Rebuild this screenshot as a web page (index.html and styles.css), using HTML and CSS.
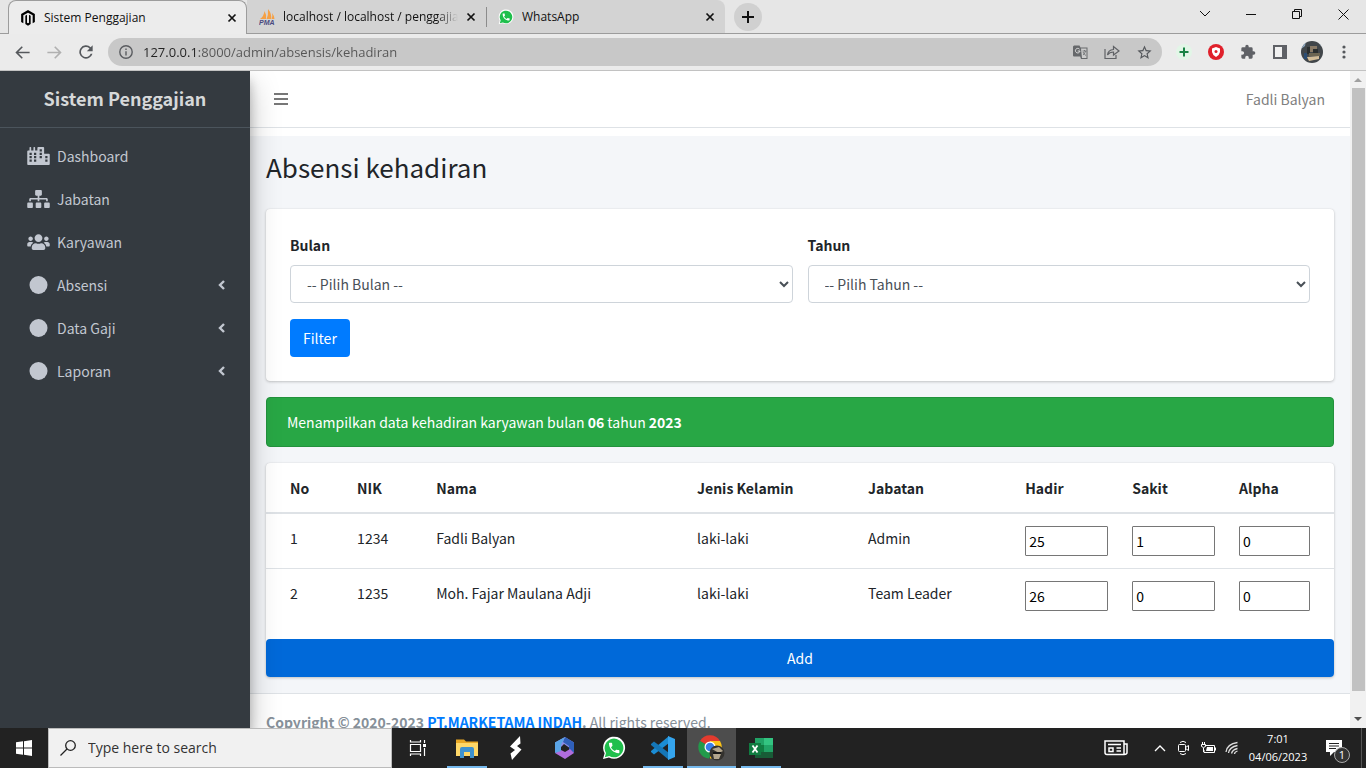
FILE: index.html
```html
<!DOCTYPE html>
<html lang="id">
<head>
<meta charset="utf-8">
<meta name="viewport" content="width=device-width, initial-scale=1">
<title>Sistem Penggajian</title>
<link rel="stylesheet" href="styles.css">
</head>
<body>
<svg class="defs" aria-hidden="true">
  <symbol id="close" viewBox="0 0 10 10"><path d="M1.5 1.5l7 7m0-7l-7 7" fill="none" stroke="#111" stroke-width="1.7"/></symbol>
  <symbol id="arrow" viewBox="0 0 24 24"><path d="M21 11H6.83l5.59-5.59L11 4l-8 8 8 8 1.41-1.41L6.83 13H21z"/></symbol>
  <symbol id="phone" viewBox="0 0 24 24"><path d="M1 23l1.6-5.8A11 11 0 1 1 7 21.4z" fill="#fff"/><path d="M2.8 21.3l1.2-4.4A9.4 9.4 0 1 1 7.300 20.100z" fill="#1fbf4c"/><path transform="translate(5.200 5) scale(.58)" d="M6.620 10.790c1.440 2.830 3.760 5.140 6.590 6.590l2.200-2.200c.27-.27.67-.36 1.020-.24 1.120.37 2.330.57 3.570.57.550 0 1 .45 1 1V20c0 .55-.45 1-1 1-9.390 0-17-7.610-17-17 0-.55.45-1 1-1h3.500c.55 0 1 .45 1 1 0 1.250.2 2.450.57 3.570.11.35.03.74-.25 1.020z" fill="#fff"/></symbol>
  <symbol id="dot" viewBox="0 0 18 18"><circle cx="9" cy="9" r="9"/></symbol>
  <symbol id="angle" viewBox="0 0 8 12"><path d="M6 2L2 6l4 4" fill="none" stroke="currentColor" stroke-width="2.400"/></symbol>
</svg>

<header class="browser">
  <div class="tabbar">
    <div class="tabs">
      <div class="tab tab-active">
        <svg class="favicon" viewBox="0 0 24 24"><path d="M12 0L1.700 6v12L5 20V8l7-4 7 4v12l3.300-2V6z"/><path d="M8 8.500v12.500l4 2.500 4-2.500V8.500l-2.500-1.300V19L12 20l-1.500-1V7.200z"/></svg>
        <span class="tab-title">Sistem Penggajian</span>
        <button class="tab-close" aria-label="Close tab"><svg width="10" height="10"><use href="#close"/></svg></button>
      </div>
      <div class="tab">
        <svg class="favicon" viewBox="0 0 16 16"><path d="M1 10Q5 7 5.500 2q2 3 1.500 8zM7.500 10Q9.500 6 9 0q4 5 3 10zM12.500 10q1.500-3 .500-6 2.500 3 2.500 6z" fill="#f5a045"/><text x="0" y="15.500" class="pma">PMA</text></svg>
        <span class="tab-title tab-fade">localhost / localhost / penggajian</span>
        <button class="tab-close" aria-label="Close tab"><svg width="10" height="10"><use href="#close"/></svg></button>
      </div>
      <div class="tab tab-divided">
        <svg class="favicon" width="18" height="18"><use href="#phone"/></svg>
        <span class="tab-title">WhatsApp</span>
        <button class="tab-close" aria-label="Close tab"><svg width="10" height="10"><use href="#close"/></svg></button>
      </div>
    </div>
    <button class="new-tab" aria-label="New tab"><svg width="12" height="12"><path d="M6 0v12M0 6h12" stroke="#111" stroke-width="2"/></svg></button>
    <div class="window-controls">
      <button aria-label="Tab search"><svg width="12" height="12" class="line"><path d="M1 3l5 5 5-5"/></svg></button>
      <button aria-label="Minimize"><svg width="10" height="10" class="line"><path d="M0 5.500h10"/></svg></button>
      <button aria-label="Restore"><svg width="10" height="10" class="line"><path d="M.5 2.500h7v7h-7zM2.500 2.500v-2h7v7h-2"/></svg></button>
      <button aria-label="Close"><svg width="11" height="11" class="line"><path d="M.5.5l10 10m0-10l-10 10"/></svg></button>
    </div>
  </div>
  <div class="toolbar">
    <button class="tool" aria-label="Back"><svg width="19" height="19" fill="#55585c"><use href="#arrow"/></svg></button>
    <button class="tool" aria-label="Forward"><svg width="19" height="19" fill="#b0b0b0" class="flip"><use href="#arrow"/></svg></button>
    <button class="tool" aria-label="Reload"><svg width="20" height="20" viewBox="0 0 24 24" fill="#55585c"><path d="M17.650 6.350A8 8 0 1 0 19.730 14h-2.080A6 6 0 1 1 16.220 7.780L13 11h7V4z"/></svg></button>
    <div class="address">
      <svg width="14" height="14" viewBox="0 0 14 14" fill="none" stroke="#5a5c60" stroke-width="1.400"><circle cx="7" cy="7" r="6.200"/><path d="M7 6.200V10.500M7 3.500v1.500"/></svg>
      <input class="url" type="text" aria-label="Address" value="127.0.0.1:8000/admin/absensis/kehadiran">
      <button class="tool" aria-label="Translate"><svg width="15" height="15" viewBox="0 0 15 15"><path d="M1 .5h5.500l1 2H14.500v11.500H8l-.8-2.500H1a1 1 0 0 1-1-1v-9z" fill="#66686b"/><path d="M8 3.500h5.500V13H9z" fill="#ccc"/><path d="M6.500 4.200A2.300 2.300 0 1 0 7 6H4.700" fill="none" stroke="#ddd"/><path d="M9.500 6h4M11.500 5v1M12.500 6q-.500 3-2.500 4m0-3q1 2.500 3 3.500" fill="none" stroke="#66686b" stroke-width=".8"/></svg></button>
      <button class="tool" aria-label="Share"><svg width="16" height="16" viewBox="0 0 16 16" fill="none" stroke="#606266" stroke-width="1.200"><path d="M1 5v9.500h11V11M3.500 11q.500-5 6-5.500V2.500L15 7l-5.500 4V8Q5.500 8 3.500 11z"/></svg></button>
      <button class="tool" aria-label="Bookmark"><svg width="17" height="17" viewBox="0 0 24 24" fill="#55585c"><path d="M22 9.240l-7.190-.62L12 2 9.190 8.630 2 9.240l5.460 4.730L5.820 21 12 17.270 18.180 21l-1.630-7.030zM12 15.400l-3.760 2.270 1-4.280-3.320-2.880 4.380-.38L12 6.100l1.710 4.040 4.380.38-3.320 2.880 1 4.280z"/></svg></button>
    </div>
    <button class="tool" aria-label="Extension"><svg width="16" height="16"><circle cx="8" cy="8" r="8" fill="#e2f6e7"/><path d="M8 3.500v9M3.500 8h9" stroke="#188344" stroke-width="2"/></svg></button>
    <button class="tool" aria-label="Ad blocker"><svg width="16" height="16"><circle cx="8" cy="8" r="8" fill="#e0202b"/><path d="M8 3l4 1.500V8q-.5 3-4 5Q4.500 11 4 8V4.500z" fill="#fff"/><circle cx="8" cy="7.500" r="1.500" fill="#e0202b"/></svg></button>
    <button class="tool" aria-label="Extensions"><svg width="16" height="16" viewBox="0 0 24 24" fill="#5f6166"><path d="M20.500 11H19V7a2 2 0 0 0-2-2h-4V3.500a2.500 2.500 0 0 0-5 0V5H4a2 2 0 0 0-2 2v3.800h1.500a2.700 2.700 0 0 1 0 5.400H2V20a2 2 0 0 0 2 2h3.800v-1.500a2.700 2.700 0 0 1 5.400 0V22H17a2 2 0 0 0 2-2v-4h1.500a2.500 2.500 0 0 0 0-5z"/></svg></button>
    <button class="tool" aria-label="Side panel"><svg width="14" height="14"><path d="M1 1h12v12H1z" fill="#f1f1f1" stroke="#5f6166" stroke-width="2"/><path d="M9 0h5v14H9z" fill="#5f6166"/></svg></button>
    <button class="tool" aria-label="Profile"><svg width="22" height="22" viewBox="0 0 22 22"><clipPath id="face"><circle cx="11" cy="11" r="11"/></clipPath><g clip-path="url(#face)"><path fill="#41464a" d="M0 0h22v22H0z"/><path fill="#8ca6be" d="M0 0h5l-1 5-4 3zM18 0h4v6l-3-2z"/><path fill="#897a66" d="M9 5h7v6H9z"/><path fill="#2a2e2e" d="M6 6h3v7H6zM12 8h5v5h-5z"/><path fill="#2b4d73" d="M3 12h3v6H3z"/><path fill="#6c6552" d="M8 12h11v3H8z"/><path fill="#d3bd98" d="M6 16l12-1v3L8 20z"/></g></svg></button>
    <button class="tool" aria-label="Menu"><svg width="4" height="14" fill="#55585c"><circle cx="2" cy="2" r="1.600"/><circle cx="2" cy="7" r="1.600"/><circle cx="2" cy="12" r="1.600"/></svg></button>
  </div>
</header>

<div class="viewport">
  <aside class="sidebar">
    <a class="brand" href="#">Sistem Penggajian</a>
    <nav class="menu">
      <a href="#"><svg class="menu-icon" viewBox="0 0 640 512"><path fill-rule="evenodd" d="M616 192H480V24c0-13-11-24-24-24H312c-13 0-24 11-24 24v72h-64V16c0-9-7-16-16-16h-16c-9 0-16 7-16 16v80h-64V16c0-9-7-16-16-16H80c-9 0-16 7-16 16v80H24c-13 0-24 11-24 24v360c0 18 14 32 32 32h576c18 0 32-14 32-32V216c0-13-11-24-24-24zM64 160h64v64H64zm0 96h64v64H64zm0 96h64v64H64zM192 160h64v64h-64zm0 96h64v64h-64zm0 96h64v64h-64zM352 64h64v64h-64zm0 96h64v64h-64zm0 96h64v64h-64zM512 256h64v64h-64zm0 96h64v64h-64z"/></svg><span>Dashboard</span></a>
      <a href="#"><svg class="menu-icon" viewBox="0 0 640 512"><path d="M128 352H32c-18 0-32 14-32 32v96c0 18 14 32 32 32h96c18 0 32-14 32-32v-96c0-18-14-32-32-32zm-24-80h192v48h48v-48h192v48h48v-58c0-21-17-38-38-38H344v-64h40c18 0 32-14 32-32V32c0-18-14-32-32-32H256c-18 0-32 14-32 32v96c0 18 14 32 32 32h40v64H94c-21 0-38 17-38 38v58h48zm264 80h-96c-18 0-32 14-32 32v96c0 18 14 32 32 32h96c18 0 32-14 32-32v-96c0-18-14-32-32-32zm240 0h-96c-18 0-32 14-32 32v96c0 18 14 32 32 32h96c18 0 32-14 32-32v-96c0-18-14-32-32-32z"/></svg><span>Jabatan</span></a>
      <a href="#"><svg class="menu-icon" viewBox="0 0 640 512"><path d="M96 224c35.300 0 64-28.700 64-64s-28.700-64-64-64-64 28.700-64 64 28.700 64 64 64zm448 0c35.300 0 64-28.700 64-64s-28.700-64-64-64-64 28.700-64 64 28.700 64 64 64zm32 32h-64c-17.600 0-33.500 7.100-45.100 18.600 40.300 22.100 68.900 62 75.100 109.400h66c17.700 0 32-14.300 32-32v-32c0-35.300-28.700-64-64-64zm-256 0c61.900 0 112-50.100 112-112S381.900 32 320 32 208 82.100 208 144s50.100 112 112 112zm76.800 32h-8.300c-20.800 10-43.900 16-68.500 16s-47.600-6-68.500-16h-8.300C179.600 288 128 339.600 128 403.200V432c0 26.500 21.500 48 48 48h288c26.500 0 48-21.500 48-48v-28.800c0-63.600-51.600-115.200-115.200-115.200zm-223.700-13.400C161.500 263.100 145.600 256 128 256H64c-35.300 0-64 28.700-64 64v32c0 17.700 14.300 32 32 32h65.900c6.300-47.400 34.900-87.300 75.200-109.400z"/></svg><span>Karyawan</span></a>
      <a href="#"><svg class="menu-icon"><use href="#dot"/></svg><span>Absensi</span><svg class="angle"><use href="#angle"/></svg></a>
      <a href="#"><svg class="menu-icon"><use href="#dot"/></svg><span>Data Gaji</span><svg class="angle"><use href="#angle"/></svg></a>
      <a href="#"><svg class="menu-icon"><use href="#dot"/></svg><span>Laporan</span><svg class="angle"><use href="#angle"/></svg></a>
    </nav>
  </aside>

  <div class="page">
    <div class="navbar">
      <button class="toggle" aria-label="Toggle menu"><svg width="14" height="12"><path d="M0 1h14M0 6h14M0 11h14" stroke="#777" stroke-width="2"/></svg></button>
      <a class="user" href="#">Fadli Balyan</a>
    </div>
    <main class="content">
      <h1>Absensi kehadiran</h1>
      <form class="card filter">
        <div class="fields">
          <div class="field">
            <label for="bulan">Bulan</label>
            <select id="bulan"><option>-- Pilih Bulan --</option></select>
          </div>
          <div class="field">
            <label for="tahun">Tahun</label>
            <select id="tahun"><option>-- Pilih Tahun --</option></select>
          </div>
        </div>
        <button class="btn" type="button">Filter</button>
      </form>
      <div class="alert">Menampilkan data kehadiran karyawan bulan <b>06</b> tahun <b>2023</b></div>
      <form class="card">
        <table>
          <colgroup><col class="c-no"><col class="c-no"><col class="c-nama"><col class="c-jk"><col class="c-jab"><col class="c-num"><col class="c-num"><col class="c-num"></colgroup>
          <thead>
            <tr><th>No</th><th>NIK</th><th>Nama</th><th>Jenis Kelamin</th><th>Jabatan</th><th>Hadir</th><th>Sakit</th><th>Alpha</th></tr>
          </thead>
          <tbody>
            <tr><td>1</td><td>1234</td><td>Fadli Balyan</td><td>laki-laki</td><td>Admin</td><td><input type="text" aria-label="Hadir" value="25"></td><td><input type="text" aria-label="Sakit" value="1"></td><td><input type="text" aria-label="Alpha" value="0"></td></tr>
            <tr><td>2</td><td>1235</td><td>Moh. Fajar Maulana Adji</td><td>laki-laki</td><td>Team Leader</td><td><input type="text" aria-label="Hadir" value="26"></td><td><input type="text" aria-label="Sakit" value="0"></td><td><input type="text" aria-label="Alpha" value="0"></td></tr>
          </tbody>
        </table>
        <button class="btn btn-block" type="button">Add</button>
      </form>
    </main>
    <footer class="footer"><b>Copyright © 2020-2023 <a href="#">PT.MARKETAMA INDAH</a>.</b> All rights reserved.</footer>
  </div>

  <div class="scrollbar">
    <svg width="8" height="4" fill="#a0a0a0"><path d="M0 4l4-4 4 4z"/></svg>
    <div class="thumb"></div>
    <svg width="8" height="4" fill="#505050"><path d="M0 0l4 4 4-4z"/></svg>
  </div>
</div>

<footer class="taskbar">
  <button class="start" aria-label="Start"><svg width="16" height="16" fill="#fff"><path d="M0 2.300l7-1v6.200H0zM8 1.200l8-1.200v7.500H8zM0 8.500h7v6.200l-7-1zM8 8.500h8V16l-8-1.200z"/></svg></button>
  <div class="search">
    <svg width="16" height="16" fill="none" stroke="#222" stroke-width="1.300"><circle cx="10.500" cy="5.500" r="4.800"/><path d="M7 9L.5 15.500"/></svg>
    <input type="text" aria-label="Search" placeholder="Type here to search">
  </div>
  <div class="tasks">
    <button class="task" aria-label="Task view"><svg width="18" height="16" fill="none" stroke="#fff" stroke-width="1.200"><path d="M1.500 4.500h10v7h-10zM1.500 0v2h10V0M1.500 16v-2h10v2M15.500 0v3M15.500 8v8"/><path d="M14 4h3v3h-3z" fill="#fff" stroke="none"/></svg></button>
    <button class="task open" aria-label="File Explorer"><svg width="22" height="20"><path d="M0 1.500h8l2 2h12V18H0z" fill="#e9a825"/><path d="M0 5h22v13H0z" fill="#ffd868"/><path d="M4 18v-7q0-2 2-2h10q2 0 2 2v9h-4v-6H8v6H4z" fill="#3f92cf"/></svg></button>
    <button class="task" aria-label="App"><svg width="14" height="24" fill="#fff"><path d="M11 0L1 10.500 6 14l-4.500 3.500L3 24l9.500-10.500L8 10l3.500-2.500z"/></svg></button>
    <button class="task" aria-label="Microsoft 365"><svg width="22" height="24"><path d="M11 1l9 5.500-5 5L10 8l-3 3v7l-6-2V6.500z" fill="#8a8ce6"/><path d="M11 1l9 5.500V17l-5-3V10L9 6z" fill="#2f5fb9"/><path d="M20 17l-9 6-10-6 6-3 4 2 5-3z" fill="#b06ddd"/><path d="M1 6.500L11 1 7 9v6l-6 2z" fill="#5aa4e6"/></svg></button>
    <button class="task" aria-label="WhatsApp"><svg width="24" height="24"><use href="#phone"/></svg></button>
    <button class="task open" aria-label="Visual Studio Code"><svg width="24" height="24" viewBox="0 0 24 24"><path d="M18 0v7L3 18.500 0 16v-1z" fill="#1b8dd4"/><path d="M18 24v-7L3 5.500 0 8v1z" fill="#1577b8"/><path d="M17 0l7 3v18l-7 3z" fill="#35a5ee"/></svg></button>
    <button class="task open current" aria-label="Chrome"><svg width="27" height="26"><path d="M12 12L2 6A11.500 11.500 0 0 1 22 6z" fill="#e33b2e"/><path d="M12 12V6h10a11.500 11.500 0 0 1-10 17.500z" fill="#fbc116"/><path d="M12 12l3 3-4 8.500A11.500 11.500 0 0 1 2 6z" fill="#229a4b"/><circle cx="12" cy="12" r="5.500" fill="#fff"/><circle cx="12" cy="12" r="4.300" fill="#3a7de8"/><circle cx="19" cy="18" r="7.500" fill="#34322e"/><path d="M14 14l7-2 4 4-4 2zM15 19h8l-2 5h-5z" fill="#b2a58d"/><path d="M15 17h8v2h-8z" fill="#161616"/></svg></button>
    <button class="task open" aria-label="Excel"><svg width="24" height="22"><path d="M6 1h9v20H6z" fill="#21a366"/><path d="M15 1h9v7h-9z" fill="#33c481"/><path d="M6 8h9v7H6z" fill="#107c41"/><path d="M15 8h9v7h-9z" fill="#21a366"/><path d="M6 15h18v6H6z" fill="#185c37"/><path d="M0 6h12v12H0z" fill="#107c41"/><path d="M3.500 8.500l5 7m0-7l-5 7" stroke="#fff" stroke-width="1.800"/></svg></button>
  </div>
  <div class="tray">
    <button class="news" aria-label="News"><svg width="24" height="16" fill="none" stroke="#fff" stroke-width="1.500"><path d="M1 1h19v13.500H3q-2 0-2-2zM20 4h3v8.500q0 2-3 2M4 4.500h13M12.500 8H17M12.500 11H17M5 8h4v3.500H5z"/></svg></button>
    <button aria-label="Hidden icons"><svg width="12" height="8" fill="none" stroke="#fff" stroke-width="1.300"><path d="M1 7l5-5 5 5"/></svg></button>
    <button aria-label="Meet now"><svg width="14" height="16" fill="none" stroke="#fff"><rect x="1.500" y="4.500" width="7" height="7" rx="1"/><path d="M8.500 7.500l3-2v5l-3-2M3 2.500q3-2.500 6 0M3 13.500q3 2.500 6 0"/></svg></button>
    <button aria-label="Battery"><svg width="17" height="14" fill="none" stroke="#fff"><path d="M6 4.500h8.500v7H4V9M15.500 6.500v3M1.500 3.500h4v2q-2 2-4 0zM2.500 1v2M4.500 1v2M3.500 7v4"/><path d="M7 6h6v4H6z" fill="#fff" stroke="none"/></svg></button>
    <button aria-label="Wi-Fi"><svg width="14" height="14" fill="none" stroke="#ddd" stroke-width="1.300"><path d="M1 11Q2 3 12.500 1.500M3.500 12Q4.500 6 12.500 4.500M6.500 12.500q1-4 6-5M9.500 13q0-2 3-3"/></svg></button>
    <div class="clock"><span>7:01</span><span>04/06/2023</span></div>
    <button class="notice" aria-label="Notifications"><svg width="18" height="17"><path d="M0 0h16v12H8l-4 4v-4H0z" fill="#fff"/><path d="M3 3.500h10M3 6h10M3 8.500h7" stroke="#222"/></svg><span class="badge">1</span></button>
  </div>
</footer>
</body>
</html>
```

FILE: styles.css
```css
* { box-sizing: border-box; }
body {
  margin: 0;
  height: 100vh;
  display: flex;
  flex-direction: column;
  overflow: hidden;
  font-family: "Noto Sans CJK JP", "Noto Sans", sans-serif;
  font-size: 14px;
  line-height: 24px;
  color: #212529;
}
button, input, select { font: inherit; }
button { border: 0; padding: 0; background: none; color: inherit; }
svg { display: block; flex: none; }
.defs { width: 0; height: 0; position: absolute; }
.line { fill: none; stroke: #111; }
.flip { transform: scaleX(-1); }

/* Browser frame */
.browser {
  flex: none;
  font-family: "Open Sans", sans-serif;
  background: #ebebeb;
  border-bottom: 1px solid #c2c2c2;
}
.tabbar {
  display: flex;
  align-items: center;
  height: 34px;
  padding-left: 8px;
  background: #e6e6e6;
  box-shadow: inset 0 -1px #9c9c9c;
}
.tabs { display: flex; }
.tab {
  display: flex;
  align-items: center;
  gap: 8px;
  width: 239px;
  height: 34px;
  padding: 0 10px 0 12px;
  background: #d3d3d3;
  border-bottom: 1px solid #9c9c9c;
  font-size: 12px;
  color: #111;
}
.tab-active {
  padding: 0 9px 0 11px;
  background: #ececec;
  border: 1px solid #9c9c9c;
  border-bottom: 0;
  border-radius: 8px 8px 0 0;
}
.tab-divided {
  border-radius: 0 8px 0 0;
  background: linear-gradient(#8c8c8c, #8c8c8c) left center / 1px 20px no-repeat #d3d3d3;
}
.favicon { width: 16px; height: 16px; }
.pma { font: italic bold 7px "Liberation Sans", sans-serif; fill: #4a4a80; }
.tab-title { flex: 1; min-width: 0; overflow: hidden; white-space: nowrap; }
.tab-fade { mask-image: linear-gradient(to right, #000 88%, transparent); }
.new-tab {
  display: grid;
  place-items: center;
  width: 28px;
  height: 28px;
  margin-left: 9px;
  border-radius: 50%;
  background: #d0d0d0;
}
.window-controls { display: flex; margin-left: auto; align-self: stretch; padding-bottom: 6px; }
.window-controls button { display: grid; place-items: center; width: 46px; }
.toolbar { display: flex; align-items: center; height: 36px; padding: 0 6px; }
.tool { flex: none; display: grid; place-items: center; width: 32px; height: 28px; }
.address {
  flex: 1;
  display: flex;
  align-items: center;
  height: 28px;
  margin: 0 6px;
  padding: 0 2px 0 11px;
  border-radius: 14px;
  background: #c8c8c8;
}
.url {
  flex: 1;
  min-width: 0;
  margin-left: 10px;
  padding: 0;
  border: 0;
  font-size: 13px;
  color: transparent;
  background: linear-gradient(to right, #222 56px, #555 56px);
  background-clip: text;
}

/* Page */
.viewport { flex: 1; min-height: 0; display: flex; overflow: hidden; }
.sidebar {
  flex: none;
  width: 250px;
  z-index: 1;
  background: #343a40;
  color: #c2c7d0;
  box-shadow: 0 14px 28px rgba(0, 0, 0, .25), 0 10px 10px rgba(0, 0, 0, .22);
}
.brand {
  display: block;
  height: 57px;
  line-height: 54px;
  border-bottom: 1px solid #4b545c;
  text-align: center;
  font-size: 18px;
  font-weight: bold;
  color: #d6d8d9;
  text-decoration: none;
}
.menu { display: flex; flex-direction: column; gap: 3px; padding: 8px; }
.menu a {
  display: flex;
  align-items: center;
  gap: 7px;
  height: 40px;
  padding: 0 16px 0 19px;
  color: #c2c7d0;
  text-decoration: none;
}
.menu-icon { width: 23px; height: 18px; fill: currentColor; }
.angle { width: 8px; height: 12px; margin-left: auto; }

.page { flex: 1; min-width: 0; display: flex; flex-direction: column; background: #fff; }
.navbar {
  flex: none;
  display: flex;
  align-items: center;
  justify-content: space-between;
  height: 57px;
  margin-bottom: 8px;
  padding: 0 25px 0 24px;
  border-bottom: 1px solid #dee2e6;
}
.user { color: #808080; text-decoration: none; }
.content {
  flex: none;
  display: flex;
  flex-direction: column;
  gap: 16px;
  padding: 14px 16px 16px;
  background: #f4f6f9;
}
h1 { margin: 0 0 9px; font-size: 26px; font-weight: normal; line-height: 34px; }
.card {
  margin: 0;
  border-radius: 4px;
  background: #fff;
  box-shadow: 0 0 1px rgba(0, 0, 0, .125), 0 1px 3px rgba(0, 0, 0, .2);
}
.filter { padding: 24px; }
.fields { display: flex; gap: 15px; margin-bottom: 16px; }
.field { flex: 1; display: flex; flex-direction: column; gap: 8px; }
.field label { font-weight: bold; }
.field select {
  height: 38px;
  padding: 0 12px;
  border: 1px solid #ced4da;
  border-radius: 4px;
  background: #fff;
  color: #495057;
}
.btn {
  display: block;
  height: 38px;
  padding: 0 13px;
  border-radius: 4px;
  background: #007bff;
  color: #fff;
}
.alert {
  padding: 12px 20px;
  border: 1px solid #23923d;
  border-radius: 4px;
  background: #28a745;
  color: #fff;
}
table { width: 100%; margin-bottom: 16px; border-spacing: 0; table-layout: fixed; }
.c-no { width: 7.4%; }
.c-nama { width: 24.4%; }
.c-jk { width: 16%; }
.c-jab { width: 14.7%; }
.c-num { width: 10%; }
th, td { padding: 12px; text-align: left; vertical-align: top; }
th { padding-top: 13px; border-bottom: 2px solid #dee2e6; }
tr + tr td { border-top: 1px solid #dee2e6; }
th:first-child, td:first-child { padding-left: 24px; }
th:last-child, td:last-child { padding-right: 24px; }
td input {
  display: block;
  width: 100%;
  height: 30px;
  padding: 1px 3px;
  border: 1px solid #767676;
  border-radius: 1px;
  color: #000;
}
.btn-block { width: 100%; background: #0069d9; }
.footer { padding: 16px; border-top: 1px solid #dee2e6; color: #869099; white-space: nowrap; }
.footer a { color: #007bff; text-decoration: none; }

.scrollbar {
  flex: none;
  display: flex;
  flex-direction: column;
  align-items: center;
  gap: 6px;
  width: 16px;
  padding: 7px 0;
  background: #f1f1f1;
}
.thumb { width: 13px; height: 603px; flex: 0 1 auto; margin-bottom: auto; background: #c1c1c1; }

/* Taskbar */
.taskbar {
  flex: none;
  display: flex;
  height: 40px;
  background: #222;
  color: #fff;
  font-family: "Open Sans", sans-serif;
}
.start { display: grid; place-items: center; width: 48px; }
.search {
  flex: none;
  display: flex;
  align-items: center;
  gap: 12px;
  width: 344px;
  padding: 0 11px;
  border: 1px solid #bbb;
  background: #f1f1f1;
}
.search input { flex: 1; min-width: 0; padding: 0; border: 0; background: none; }
.search input::placeholder { color: #333; }
.tasks { display: flex; padding-left: 1px; }
.task { display: grid; place-items: center; width: 49px; }
.open {
  background: linear-gradient(#76b9ed, #76b9ed) center bottom / 40px 2px no-repeat;
}
.current { background-color: #4d4d4d; background-size: 100% 2px; }
.tray { display: flex; align-items: center; margin-left: auto; margin-right: 4px; padding-right: 3px; border-right: 1px solid #555; }
.tray button { display: grid; place-items: center; width: 24px; }
.tray .news { width: 40px; margin-right: 12px; }
.clock {
  display: flex;
  flex-direction: column;
  width: 68px;
  text-align: center;
  font-size: 11px;
  line-height: 18px;
}
.tray .notice { position: relative; width: 46px; }
.badge {
  position: absolute;
  left: 22px;
  top: 7px;
  width: 16px;
  height: 16px;
  border: 1px solid #aaa;
  border-radius: 50%;
  background: #333;
  font-size: 11px;
  line-height: 14px;
}
```
